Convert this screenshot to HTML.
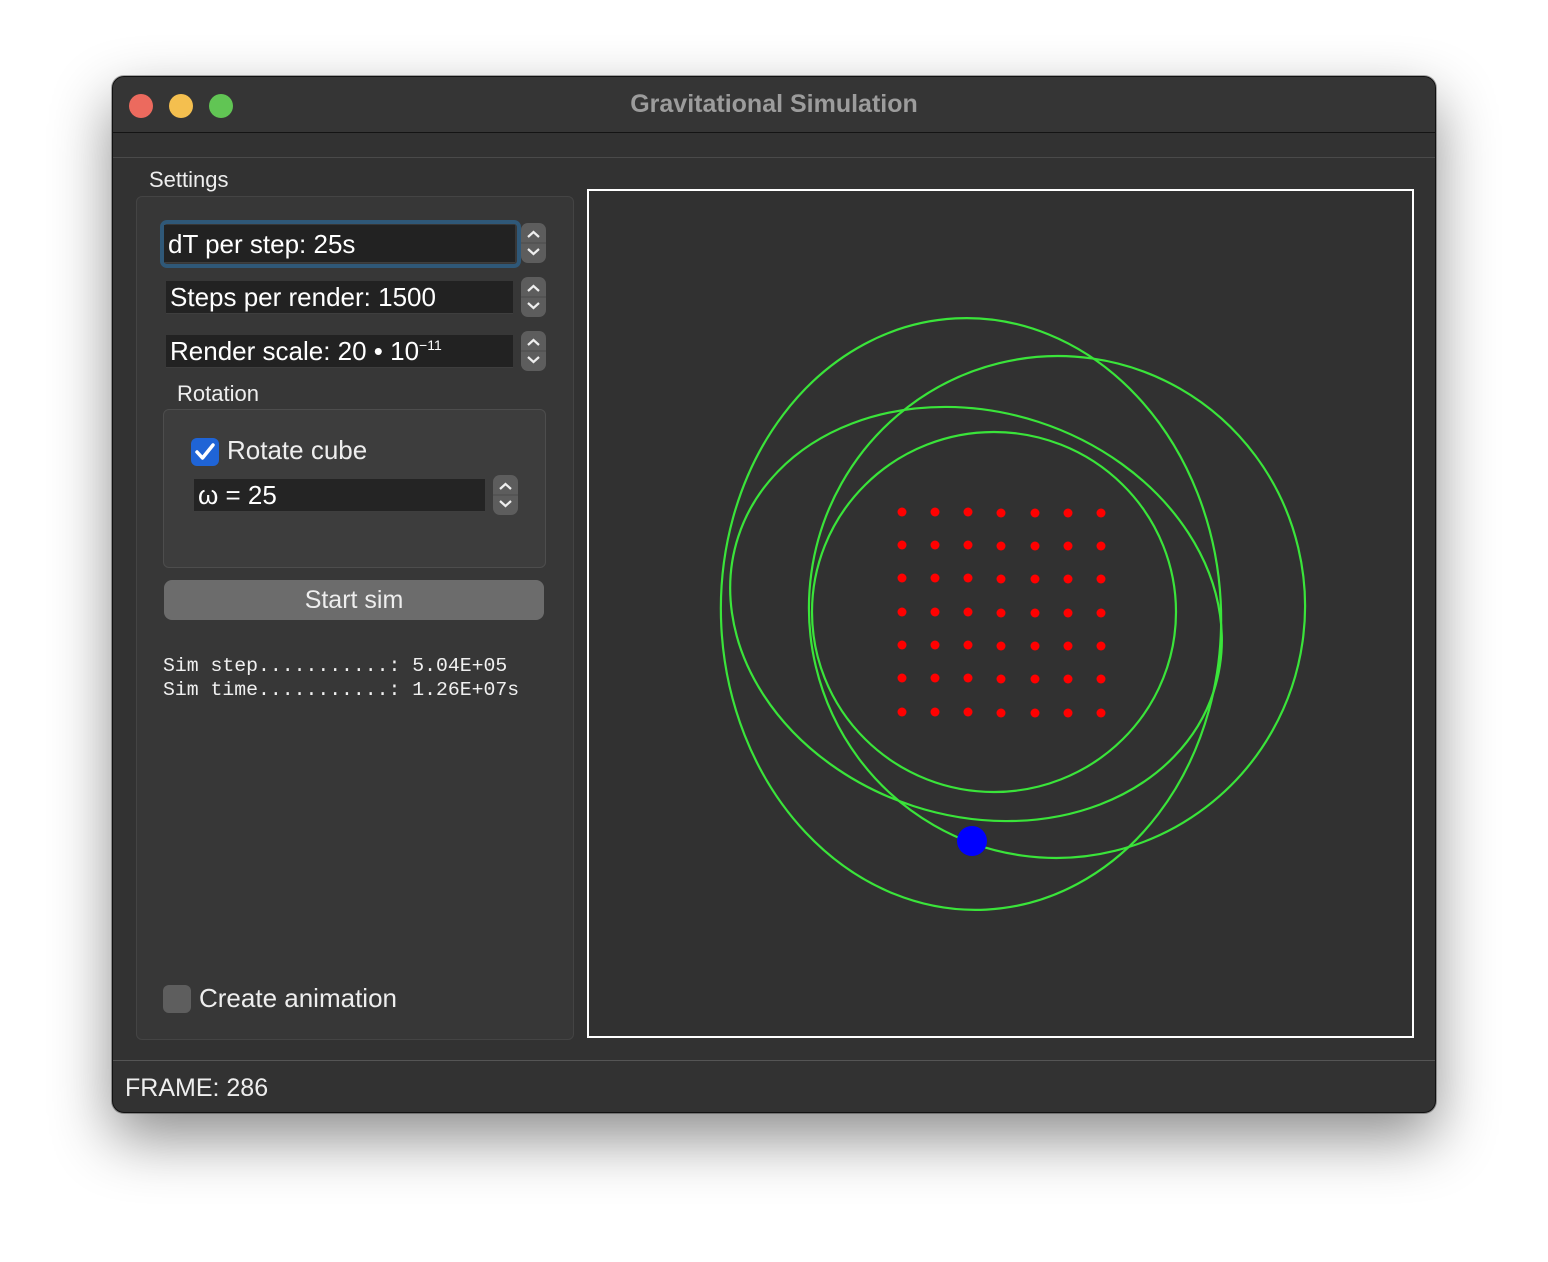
<!DOCTYPE html>
<html><head><meta charset="utf-8"><style>
*{margin:0;padding:0;box-sizing:border-box}
body{width:1548px;height:1262px;background:#fff;position:relative;overflow:hidden;font-family:"Liberation Sans",sans-serif;color:#e6e6e6}
.win{position:absolute;left:112px;top:76px;width:1324px;height:1037px;background:#323232;border-radius:12px;border:1px solid #111;box-shadow:0 25px 60px rgba(0,0,0,.45),0 0 0 1px rgba(0,0,0,.3);overflow:hidden}
.title{position:absolute;left:0;top:0;width:100%;height:56px;background:#353535;border-bottom:1px solid #141414}
.dot{position:absolute;top:17px;width:24px;height:24px;border-radius:50%}
.ttext{position:absolute;left:0;width:100%;top:13px;text-align:center;font-size:25px;font-weight:bold;color:#9c9c9c}
.abs{position:absolute}
.field{position:absolute;background:#222;border-bottom:1px solid #3e3e3e;font-size:26px;color:#fff;padding-left:4px;line-height:32px;white-space:nowrap}
.spin{position:absolute;width:25px;height:40px;background:#5d5d5d;border-radius:7px}
.spin svg{position:absolute;left:0;top:0}
.mono{font-family:"Liberation Mono",monospace;font-size:19.8px;color:#f0f0f0;line-height:24px;white-space:pre}
</style></head><body>
<div class="win">
 <div class="title">
  <div class="dot" style="left:16px;background:#ec6a5e"></div>
  <div class="dot" style="left:56px;background:#f4bf4f"></div>
  <div class="dot" style="left:96px;background:#61c554"></div>
  <div class="ttext">Gravitational Simulation</div>
 </div>
 <div class="abs" style="left:0;top:80px;width:100%;height:1px;background:#4a4a4a"></div>
 <div class="abs" style="left:36px;top:90px;font-size:22px;color:#eee">Settings</div>
 <div class="abs" style="left:23px;top:119px;width:438px;height:844px;background:#373737;border:1px solid #444;border-radius:6px"></div>
 <div class="abs" style="left:47px;top:143px;width:361px;height:48px;border:4px solid #2f5878;border-radius:7px"></div>
 <div class="field" style="left:51px;top:148px;width:351px;height:38px;line-height:38px">dT per step: 25s</div>
 <div class="spin" style="left:408px;top:146px"><svg width="25" height="40"><path d="M7 14l5.5-5 5.5 5M7 26l5.5 5 5.5-5" stroke="#eee" stroke-width="2.2" fill="none"/><path d="M0 20h25" stroke="#4a4a4a"/></svg></div>
 <div class="field" style="left:53px;top:204px;width:347px;height:33px">Steps per render: 1500</div>
 <div class="spin" style="left:408px;top:200px"><svg width="25" height="40"><path d="M7 14l5.5-5 5.5 5M7 26l5.5 5 5.5-5" stroke="#eee" stroke-width="2.2" fill="none"/><path d="M0 20h25" stroke="#4a4a4a"/></svg></div>
 <div class="field" style="left:53px;top:258px;width:347px;height:33px;line-height:33px">Render scale: 20 • 10<span style="font-size:14px;position:relative;top:-10px">−11</span></div>
 <div class="spin" style="left:408px;top:254px"><svg width="25" height="40"><path d="M7 14l5.5-5 5.5 5M7 26l5.5 5 5.5-5" stroke="#eee" stroke-width="2.2" fill="none"/><path d="M0 20h25" stroke="#4a4a4a"/></svg></div>
 <div class="abs" style="left:64px;top:304px;font-size:22px;color:#eee">Rotation</div>
 <div class="abs" style="left:50px;top:332px;width:383px;height:159px;background:#3d3d3d;border:1px solid #4d4d4d;border-radius:6px"></div>
 <div class="abs" style="left:78px;top:361px;width:28px;height:28px;background:#1f64d6;border-radius:6px"><svg width="28" height="28"><path d="M6 14l5.5 6L22 7" stroke="#fff" stroke-width="3.5" fill="none" stroke-linecap="round" stroke-linejoin="round"/></svg></div>
 <div class="abs" style="left:114px;top:358px;font-size:26px;color:#eee">Rotate cube</div>
 <div class="field" style="left:81px;top:402px;width:291px;height:33px;background:#242424">ω = 25</div>
 <div class="spin" style="left:380px;top:398px"><svg width="25" height="40"><path d="M7 14l5.5-5 5.5 5M7 26l5.5 5 5.5-5" stroke="#eee" stroke-width="2.2" fill="none"/><path d="M0 20h25" stroke="#4a4a4a"/></svg></div>
 <div class="abs" style="left:51px;top:503px;width:380px;height:40px;background:#6c6c6c;border-radius:8px;text-align:center;font-size:25px;line-height:40px;color:#eee">Start sim</div>
 <div class="abs mono" style="left:50px;top:577px">Sim step...........: 5.04E+05
Sim time...........: 1.26E+07s</div>
 <div class="abs" style="left:50px;top:908px;width:28px;height:28px;background:#5e5e5e;border-radius:6px"></div>
 <div class="abs" style="left:86px;top:906px;font-size:26px;color:#eee">Create animation</div>
 <div class="abs" style="left:474px;top:112px;width:827px;height:849px;border:2px solid #fff;background:#313131">
  <svg width="823" height="845" style="position:absolute;left:0;top:0">
   <g fill="none" stroke="#3ae43a" stroke-width="2.2" transform="translate(-588,-190)">
    <ellipse cx="970" cy="613" rx="250" ry="296" transform="rotate(-3 970 613)"/>
    <ellipse cx="1056" cy="606" rx="248" ry="251" transform="rotate(8 1056 606)"/>
    <ellipse cx="975" cy="613" rx="250" ry="202" transform="rotate(18 975 613)"/>
    <ellipse cx="993" cy="611" rx="182" ry="180"/>
   </g>
   <g fill="#ff0000" transform="translate(-588,-190)">
    <g id="r"><circle cx="901" cy="511" r="4.5"/><circle cx="934" cy="511" r="4.5"/><circle cx="967" cy="511" r="4.5"/><circle cx="1000" cy="512" r="4.5"/><circle cx="1034" cy="512" r="4.5"/><circle cx="1067" cy="512" r="4.5"/><circle cx="1100" cy="512" r="4.5"/></g>
    <use href="#r" y="33"/><use href="#r" y="66"/><use href="#r" y="100"/><use href="#r" y="133"/><use href="#r" y="166"/><use href="#r" y="200"/>
   </g>
   <circle cx="383" cy="650" r="15" fill="#0000ff"/>
  </svg>
 </div>
 <div class="abs" style="left:0;top:983px;width:100%;height:1px;background:#555"></div>
 <div class="abs" style="left:12px;top:997px;font-size:25px;color:#eee">FRAME: 286</div>
</div>
</body></html>
